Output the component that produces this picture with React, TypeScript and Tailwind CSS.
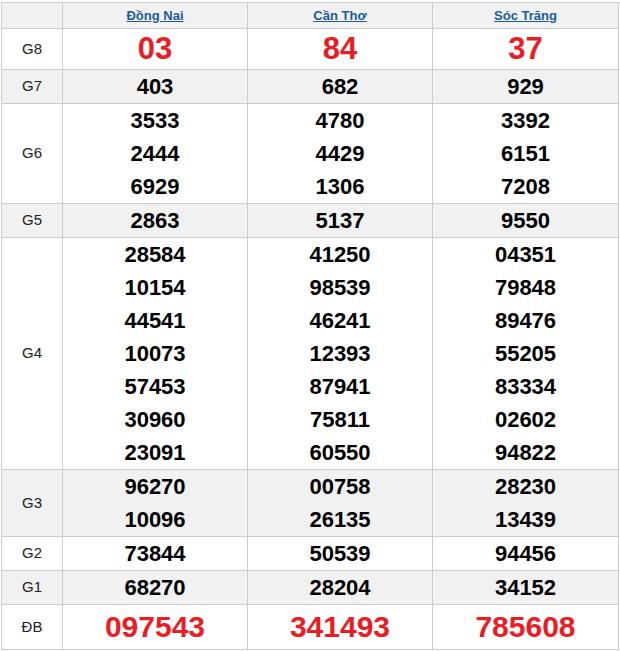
import React from "react";

const provinces = ["Đồng Nai", "Cần Thơ", "Sóc Trăng"];

type Row = { label: string; values: string[][]; kind: "big" | "normal" | "db"; gray: boolean };

const rows: Row[] = [
  { label: "G8", kind: "big", gray: false, values: [["03"], ["84"], ["37"]] },
  { label: "G7", kind: "normal", gray: true, values: [["403"], ["682"], ["929"]] },
  {
    label: "G6",
    kind: "normal",
    gray: false,
    values: [
      ["3533", "2444", "6929"],
      ["4780", "4429", "1306"],
      ["3392", "6151", "7208"],
    ],
  },
  { label: "G5", kind: "normal", gray: true, values: [["2863"], ["5137"], ["9550"]] },
  {
    label: "G4",
    kind: "normal",
    gray: false,
    values: [
      ["28584", "10154", "44541", "10073", "57453", "30960", "23091"],
      ["41250", "98539", "46241", "12393", "87941", "75811", "60550"],
      ["04351", "79848", "89476", "55205", "83334", "02602", "94822"],
    ],
  },
  {
    label: "G3",
    kind: "normal",
    gray: true,
    values: [
      ["96270", "10096"],
      ["00758", "26135"],
      ["28230", "13439"],
    ],
  },
  { label: "G2", kind: "normal", gray: false, values: [["73844"], ["50539"], ["94456"]] },
  { label: "G1", kind: "normal", gray: true, values: [["68270"], ["28204"], ["34152"]] },
  { label: "ĐB", kind: "db", gray: false, values: [["097543"], ["341493"], ["785608"]] },
];

export default function App() {
  return (
    <div
      className="bg-white pl-[1px] pt-[2px] w-[620px] h-[651px]"
      style={{ fontFamily: '"Liberation Sans", Arial, sans-serif' }}
    >
      <table className="w-[618px] table-fixed border-collapse border border-[#cccccc]">
        <colgroup>
          <col className="w-[61px]" />
          <col className="w-[185px]" />
          <col className="w-[185px]" />
          <col className="w-[186px]" />
        </colgroup>
        <thead>
          <tr className="bg-[#f1f1f1]">
            <th className="border border-[#cccccc] p-0 h-[25px]"></th>
            {provinces.map((p) => (
              <th key={p} className="border border-[#cccccc] p-0 h-[25px] text-center align-middle">
                <a className="text-[13px] font-bold text-[#1b5b9f] underline leading-[25px] cursor-pointer">
                  {p}
                </a>
              </th>
            ))}
          </tr>
        </thead>
        <tbody>
          {rows.map((r) => (
            <tr key={r.label} className={r.gray ? "bg-[#f1f1f1]" : "bg-white"}>
              <td className="border border-[#cccccc] p-0 text-center align-middle text-[15px] text-[#222222]">
                {r.label}
              </td>
              {r.values.map((col, ci) => (
                <td key={ci} className="border border-[#cccccc] p-0 text-center align-middle">
                  {col.map((v, vi) =>
                    r.kind === "big" ? (
                      <div key={vi} className="text-[31px] font-bold text-[#ed1c24] leading-[40px]">
                        {v}
                      </div>
                    ) : r.kind === "db" ? (
                      <div key={vi} className="text-[30px] font-bold text-[#ed1c24] leading-[44px]">
                        {v}
                      </div>
                    ) : (
                      <div key={vi} className="text-[22px] font-bold text-black leading-[33px]">
                        {v}
                      </div>
                    )
                  )}
                </td>
              ))}
            </tr>
          ))}
        </tbody>
      </table>
    </div>
  );
}
